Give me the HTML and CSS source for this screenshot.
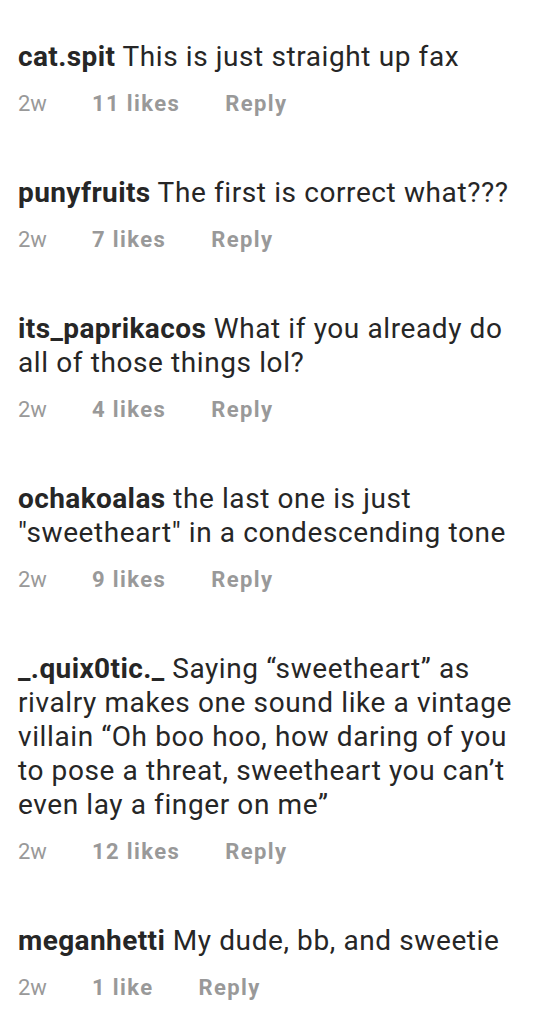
FILE: index.html
```html
<!DOCTYPE html>
<html lang="en">
<head>
  <meta charset="UTF-8" />
  <meta name="viewport" content="width=device-width, initial-scale=1" />
  <title>Comments</title>
  <link rel="stylesheet" href="styles.css">
</head>
<body>
  <ul class="comments">
    <li class="comment">
      <p class="comment-text"><span class="user">cat.spit</span> This is just straight up fax</p>
      <div class="meta"><span class="age">2w</span><span class="likes">11 likes</span><span class="reply">Reply</span></div>
    </li>
    <li class="comment">
      <p class="comment-text"><span class="user">punyfruits</span> The first is correct what???</p>
      <div class="meta"><span class="age">2w</span><span class="likes">7 likes</span><span class="reply">Reply</span></div>
    </li>
    <li class="comment">
      <p class="comment-text"><span class="user">its_paprikacos</span> What if you already do all of those things lol?</p>
      <div class="meta"><span class="age">2w</span><span class="likes">4 likes</span><span class="reply">Reply</span></div>
    </li>
    <li class="comment">
      <p class="comment-text"><span class="user">ochakoalas</span> the last one is just "sweetheart" in a condescending tone</p>
      <div class="meta"><span class="age">2w</span><span class="likes">9 likes</span><span class="reply">Reply</span></div>
    </li>
    <li class="comment">
      <p class="comment-text"><span class="user">_.quix0tic._</span> Saying “sweetheart” as rivalry makes one sound like a vintage villain “Oh boo hoo, how daring of you to pose a threat, sweetheart you can’t even lay a finger on me”</p>
      <div class="meta"><span class="age">2w</span><span class="likes">12 likes</span><span class="reply">Reply</span></div>
    </li>
    <li class="comment">
      <p class="comment-text"><span class="user">meganhetti</span> My dude, bb, and sweetie</p>
      <div class="meta"><span class="age">2w</span><span class="likes">1 like</span><span class="reply">Reply</span></div>
    </li>
  </ul>
</body>
</html>
```

FILE: styles.css
```css
:root {
  --text: #262626;
  --muted: #999999;
}
body {
  margin: 0;
  background: #ffffff;
  font-family: Roboto, "Liberation Sans", sans-serif;
  color: var(--text);
}
.comments {
  list-style: none;
  margin: 0;
  padding: 40px 16px 0 18px;
  display: flex;
  flex-direction: column;
  gap: 57px;
}
.comment-text {
  margin: 0;
  font-size: 28px;
  line-height: 34px;
  letter-spacing: 0.6px;
}
.user {
  font-weight: 700;
  letter-spacing: 0.4px;
}
.meta {
  margin-top: 15px;
  display: flex;
  gap: 45px;
  font-size: 22px;
  line-height: 30px;
  color: var(--muted);
}
.likes,
.reply {
  font-weight: 700;
  letter-spacing: 1.4px;
}
```
